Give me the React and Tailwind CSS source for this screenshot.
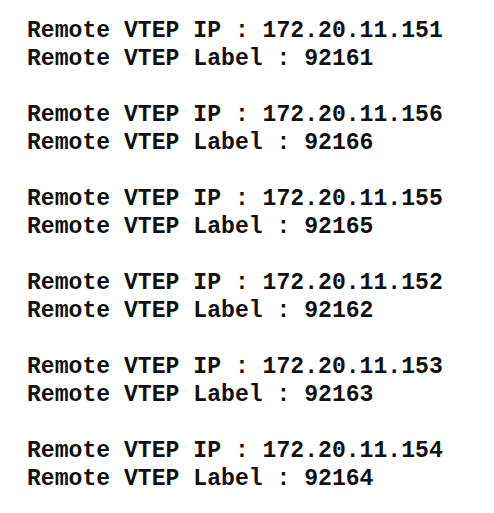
const entries = [
  { ip: '172.20.11.151', label: '92161' },
  { ip: '172.20.11.156', label: '92166' },
  { ip: '172.20.11.155', label: '92165' },
  { ip: '172.20.11.152', label: '92162' },
  { ip: '172.20.11.153', label: '92163' },
  { ip: '172.20.11.154', label: '92164' },
];

export default function App() {
  return (
    <div className="w-[494px] h-[513px] bg-white pl-[27px] pt-[17px] overflow-hidden">
      <div className="flex flex-col gap-[28px] font-['Liberation_Mono',monospace] font-bold text-[23.1px] leading-[28px] text-[#111] whitespace-pre">
        {entries.map((e) => (
          <div key={e.ip}>
            <div>Remote VTEP IP : {e.ip}</div>
            <div>Remote VTEP Label : {e.label}</div>
          </div>
        ))}
      </div>
    </div>
  );
}
